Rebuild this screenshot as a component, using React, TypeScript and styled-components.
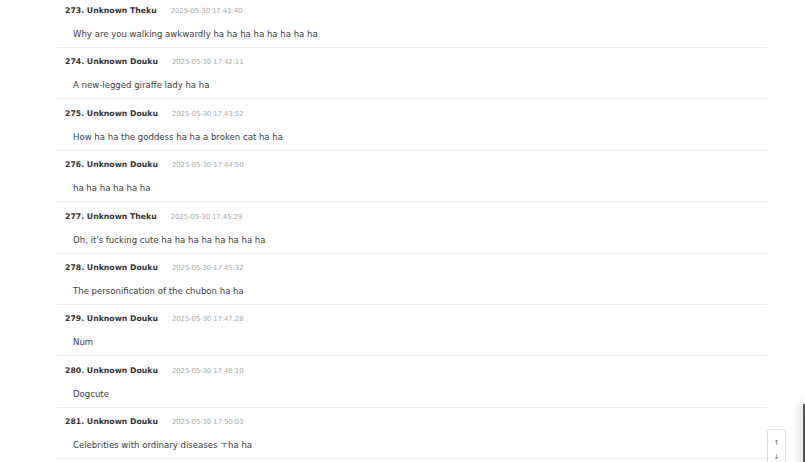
import React from "react";
import styled, { createGlobalStyle } from "styled-components";

const Global = createGlobalStyle`
  html, body { margin: 0; padding: 0; background: #ffffff; overflow: hidden; }
  body { font-family: "DejaVu Sans", "Noto Sans CJK KR", sans-serif; }
`;

const Page = styled.div`
  width: 805px;
  height: 462px;
  overflow: hidden;
  position: relative;
  background: #fff;
`;

const List = styled.ul`
  list-style: none;
  margin: -3.4px 0 0 57px;
  padding: 0;
  width: 710px;
`;

const Row = styled.li`
  padding: 9.4px 0 7px 8px;
  border-bottom: 1px solid #ececec;
`;

const Head = styled.div`
  display: flex;
  align-items: baseline;
  gap: 14px;
  height: 10px;
  line-height: 10px;
`;

const Name = styled.span`
  font-size: 7.75px;
  font-weight: 700;
  color: #333;
`;

const Time = styled.span`
  font-size: 7px;
  color: #a8a8a8;
  letter-spacing: -0.15px;
`;

const Body = styled.p`
  margin: 12px 0 0 0;
  padding-left: 8px;
  height: 12px;
  line-height: 12px;
  font-size: 8.55px;
  color: #3c3c3c;
`;

const ScrollBtns = styled.div`
  position: absolute;
  left: 767px;
  top: 429px;
  width: 19px;
  height: 46px;
  border: 1px solid #dedede;
  border-radius: 3px;
  background: #fff;
  display: flex;
  flex-direction: column;
  align-items: center;
  box-sizing: border-box;
`;

const Arrow = styled.span<{ $first?: boolean }>`
  font-size: 7px;
  line-height: 14px;
  color: #666;
  margin-top: ${(p) => (p.$first ? "6px" : "0")};
`;

const SidePanel = styled.div`
  position: absolute;
  left: 803px;
  top: 404px;
  width: 10px;
  height: 80px;
  background: #555;
  box-shadow: -4px 0 8px rgba(0, 0, 0, 0.12);
`;

const comments = [
  { n: 273, name: "Unknown Theku", t: "2025-05-30 17:41:40", text: "Why are you walking awkwardly ha ha ha ha ha ha ha ha" },
  { n: 274, name: "Unknown Douku", t: "2025-05-30 17:42:11", text: "A new-legged giraffe lady ha ha" },
  { n: 275, name: "Unknown Douku", t: "2025-05-30 17:43:52", text: "How ha ha the goddess ha ha a broken cat ha ha" },
  { n: 276, name: "Unknown Douku", t: "2025-05-30 17:44:50", text: "ha ha ha ha ha ha" },
  { n: 277, name: "Unknown Theku", t: "2025-05-30 17:45:29", text: "Oh, it's fucking cute ha ha ha ha ha ha ha ha" },
  { n: 278, name: "Unknown Douku", t: "2025-05-30 17:45:32", text: "The personification of the chubon ha ha" },
  { n: 279, name: "Unknown Douku", t: "2025-05-30 17:47:28", text: "Num" },
  { n: 280, name: "Unknown Douku", t: "2025-05-30 17:48:10", text: "Dogcute" },
  { n: 281, name: "Unknown Douku", t: "2025-05-30 17:50:03", text: "Celebrities with ordinary diseases ㅜha ha" },
];

export default function App() {
  return (
    <Page>
      <Global />
      <List>
        {comments.map((c) => (
          <Row key={c.n}>
            <Head>
              <Name>
                {c.n}. {c.name}
              </Name>
              <Time>{c.t}</Time>
            </Head>
            <Body>{c.text}</Body>
          </Row>
        ))}
      </List>
      <ScrollBtns>
        <Arrow $first>↑</Arrow>
        <Arrow>↓</Arrow>
      </ScrollBtns>
      <SidePanel />
    </Page>
  );
}
